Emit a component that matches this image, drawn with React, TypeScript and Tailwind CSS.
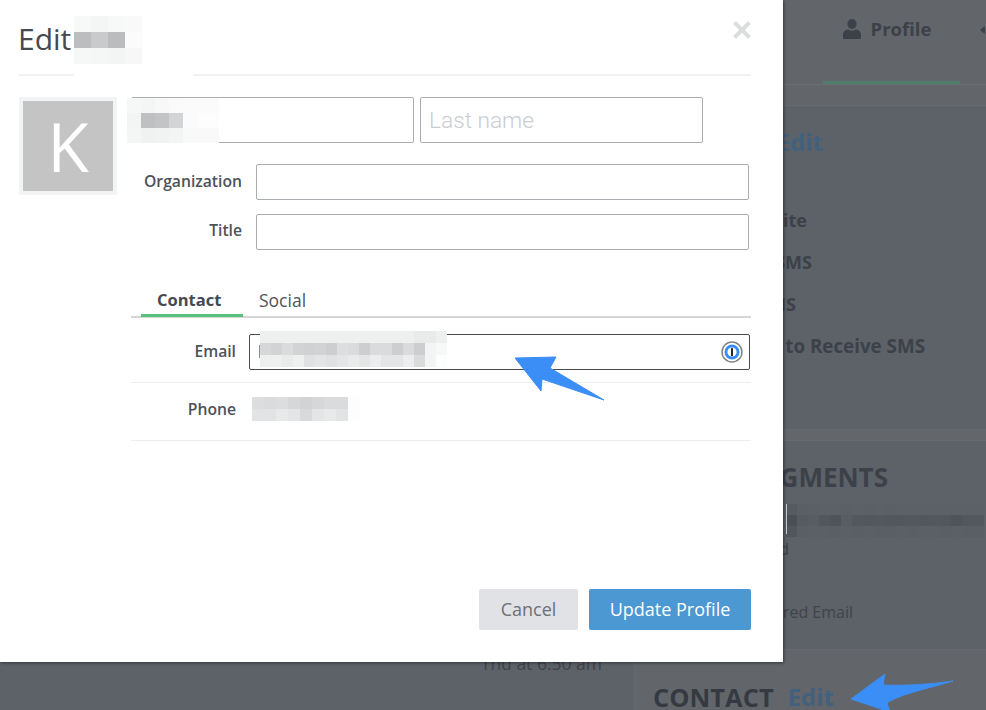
const Mosaic = ({ cols, cell, h, className }: { cols: string[][]; cell: number; h: number; className: string }) => (
  <div className={"absolute flex flex-col overflow-hidden " + className}>
    {cols.map((row, i) => (
      <div key={i} className="flex" style={{ height: h }}>
        {row.map((c, j) => (
          <div key={j} className="shrink-0" style={{ width: cell, height: h, backgroundColor: c }} />
        ))}
      </div>
    ))}
  </div>
);

const W = "#ffffff";
const inputCls = "h-full w-full rounded-[2px] border border-[#a9adb2] bg-white outline-none";

export default function App() {
  return (
    <div className="relative h-[710px] w-[986px] overflow-hidden bg-[#5d6168] font-['Open_Sans','Liberation_Sans',sans-serif] text-[#3a3f47]">
      {/* Page behind the dialog */}
      <div className="flex h-full">
        <div className="flex w-[635px] shrink-0 flex-col items-end justify-end border-r border-[#666a70] pb-[37px] pr-[32px]">
          <span className="text-[17.500px] leading-5 text-[#3f444b]">Thu at 6:50 am</span>
        </div>
        <div className="flex min-w-0 flex-1 flex-col">
          <div className="flex h-[85px] shrink-0 border-b border-[#6c7075] bg-[#62666a]">
            <div className="ml-[188px] flex h-[84px] w-[137px] shrink-0 justify-center border-b-[3px] border-[#4f7f6a] pr-[9px] pt-[16px]">
              <div className="flex h-[26px] items-center gap-[10px] text-[18.500px] font-bold text-[#3c4149]">
                <svg width="18" height="20" viewBox="0 0 18 20" fill="#3c4149">
                  <ellipse cx="9" cy="5" rx="4.600" ry="5" />
                  <path d="M1 20c-.6 0-1-.4-1-1v-3.600C0 12.500 3 10.500 5.500 10.500c1 .8 2.200 1.200 3.500 1.200s2.500-.4 3.500-1.200c2.500 0 5.500 2 5.500 4.900V19c0 .6-.4 1-1 1z" />
                </svg>
                Profile
              </div>
            </div>
            <svg className="ml-[20px] mt-[26px] shrink-0" width="5" height="8" viewBox="0 0 5 8" fill="#3c4149">
              <path d="M0 4 5 0V8Z" />
            </svg>
          </div>
          <div className="h-[21px] shrink-0 border-b border-[#666a70] bg-[#62666a]" />
          <div className="h-[323px] shrink-0 font-bold text-[#3c4149]">
            <div className="mt-[20px] flex h-[32px] w-[188px] items-center justify-end gap-[14px] text-[24px]">
              <span>PROFILE</span>
              <span className="text-[#43607c]">Edit</span>
            </div>
            <div className="mt-[41px] flex flex-col text-[18px] leading-[42px]">
              <span className="flex w-[172px] justify-end whitespace-nowrap">Website</span>
              <span className="flex w-[177px] justify-end whitespace-nowrap">Text SMS</span>
              <span className="flex w-[161px] justify-end whitespace-nowrap">Text SMS</span>
              <span className="flex w-[290px] justify-end whitespace-nowrap text-[18.800px]">Opted to Receive SMS</span>
            </div>
          </div>
          <div className="h-[12px] shrink-0 border-y border-[#666a70] bg-[#63676b]" />
          <div className="h-[208px] shrink-0 text-[#3c4149]">
            <div className="mt-[20px] flex w-[253px] justify-end whitespace-nowrap text-[26px] font-bold leading-[32px]">SEGMENTS</div>
            <div className="mt-[46px] flex w-[154px] justify-end whitespace-nowrap text-[16px] leading-5">Assigned</div>
            <div className="mt-[43px] flex w-[218px] justify-end whitespace-nowrap text-[16px] leading-5 text-[#3f444b]">Preferred Email</div>
          </div>
          <div className="border-t border-[#666a70] bg-[#62666a] pl-[18px] pt-[31px]">
            <div className="flex items-center gap-[14px] font-bold leading-[32px]">
              <span className="text-[25.500px] text-[#353a42]">CONTACT</span>
              <span className="text-[24px] text-[#43607c]">Edit</span>
            </div>
          </div>
        </div>
      </div>

      <Mosaic
        className="left-[786px] top-[504px]"
        cell={11}
        h={11}
        cols={[
          ["#555a61", "#5a5e65", "#5b5f66", "#5c6067", "#5c6067", "#5b5f66", "#5c6067", "#5b5f66", "#5c6067", "#5b5f66", "#5c6067", "#5c6067", "#5c6067", "#5c6067", "#5c6067", "#5c6067", "#5c6067", "#5c6067"],
          ["#4a4f57", "#565a61", "#585c63", "#52565e", "#4f535b", "#585c63", "#53575e", "#52565e", "#53575e", "#52565e", "#52565e", "#53575e", "#52565e", "#53575e", "#52565e", "#4f535b", "#52565e", "#53575e"],
          ["#51555d", "#5a5e65", "#5b5f66", "#5b5f66", "#5a5e65", "#5b5f66", "#5a5e65", "#5b5f66", "#5a5e65", "#5a5e65", "#5b5f66", "#5a5e65", "#5b5f66", "#5b5f66", "#5a5e65", "#5b5f66", "#5a5e65", "#5a5e65"],
        ]}
      />
      <div className="absolute left-[786px] top-[504px] h-[30px] w-px bg-[#c9cbce]" />

      {/* Dialog */}
      <div className="absolute left-0 top-0 flex h-[662px] w-[783px] flex-col bg-white pl-[19px] pr-[32px] shadow-[1px_1px_3px_rgba(0,0,0,0.45)]">
        <div className="relative h-[76px] shrink-0 border-b-2 border-[#f1f2f3]">
          <h1 className="-ml-px pt-[20px] text-[30px] font-normal leading-[38px] text-[#454a52]">Edit</h1>
          <span className="absolute right-[-1px] top-[20px] text-[#dcdddf]">
            <svg width="20" height="20" viewBox="0 0 20 20" fill="none" stroke="currentColor" strokeWidth="4">
              <path d="M2.500 2.500 17.500 17.500M17.500 2.500 2.500 17.500" />
            </svg>
          </span>
        </div>

        <div className="mt-[21px] flex">
          <div className="w-[112px] shrink-0">
            <div className="flex h-[98px] w-[98px] items-center justify-center rounded-[2px] border-[4px] border-[#f2f3f4] bg-[#c4c4c4] text-[68px] font-normal leading-none text-white">
              K
            </div>
          </div>
          <div className="w-[620px] text-[15.700px] font-semibold text-[#4d525a]">
            <div className="flex h-[46px] w-[572px] gap-[6px]">
              <div className="h-full flex-1">
                <input aria-label="First name" className={inputCls} />
              </div>
              <div className="h-full flex-1">
                <input
                  placeholder="Last name"
                  className={inputCls + " px-[8px] font-['Roboto',sans-serif] text-[22.700px] font-light text-[#3a3f47] placeholder:text-[#c9ccd1]"}
                />
              </div>
            </div>
            <div className="mt-[21px] flex h-[36px] items-center">
              <label className="w-[111px] pb-[3px] text-right leading-5">Organization</label>
              <div className="ml-[14px] h-full w-[493px]">
                <input aria-label="Organization" className={inputCls} />
              </div>
            </div>
            <div className="mt-[14px] flex h-[36px] items-center">
              <label className="w-[111px] pb-[5px] text-right leading-5">Title</label>
              <div className="ml-[14px] h-full w-[493px]">
                <input aria-label="Title" className={inputCls} />
              </div>
            </div>

            <div className="mt-[38px] flex h-[30px] border-b-2 border-[#d3d5d8] pl-[10px]">
              <div className="h-[29px] w-[102px] border-b-[3px] border-[#5ac17d] pl-[16px] text-[16.500px] font-bold leading-[24px] text-[#454a52]">
                Contact
              </div>
              <div className="ml-[16px] text-[17.500px] font-normal leading-[24px] text-[#4f545c]">Social</div>
            </div>

            <div className="flex h-[65px] items-start border-b border-[#eceded] pt-[16px]">
              <label className="flex h-[36px] w-[105px] items-center justify-end pb-[2px] leading-5">Email</label>
              <div className="relative ml-[13px] h-[36px] w-[501px]">
                <input aria-label="Email" className="h-full w-full rounded-[2px] border border-[#474c54] bg-white outline-none" />
                <svg className="absolute right-[7px] top-[7px]" width="22" height="22" viewBox="0 0 22 22">
                  <circle cx="11" cy="11" r="10" fill="#fff" stroke="#7f8388" strokeWidth="1.500" />
                  <circle cx="11" cy="11" r="7.500" fill="#3b8cf0" />
                  <circle cx="11" cy="11" r="4.600" fill="#fff" />
                  <rect x="10" y="7" width="2" height="8" rx="0.500" fill="#222730" />
                </svg>
              </div>
            </div>
            <div className="flex h-[58px] items-center border-b border-[#eceded] pb-[5px]">
              <label className="w-[105px] text-right leading-5">Phone</label>
            </div>
          </div>
        </div>

        <div className="mt-auto mb-[32px] flex justify-end gap-[11px] text-[18px]">
          <button className="h-[41px] w-[99px] rounded-[2px] bg-[#e0e2e6] font-normal text-[#6c7077]">Cancel</button>
          <button className="h-[41px] w-[162px] rounded-[2px] bg-[#4b98d3] font-normal text-white">Update Profile</button>
        </div>
      </div>

      {/* Redaction mosaics */}
      <Mosaic
        className="left-[74px] top-[16px]"
        cell={17}
        h={16}
        cols={[
          ["#f7f8f8", "#f4f5f5", "#f7f8f8", "#f9f9f9", W, W, W],
          ["#bcbdbf", "#c9cacc", "#bbbcbe", "#fbfbfb", W, W, W],
          ["#f6f7f7", "#f5f6f6", "#f3f4f4", "#f7f7f7", W, W, W],
          [W, W, W, W, W, W, W],
        ]}
      />
      <Mosaic
        className="left-[127px] top-[98px] w-[92px]"
        cell={14}
        h={15}
        cols={[
          ["#f6f7f7", "#f4f5f5", "#f8f8f8", "#fafafa", "#fbfbfb", "#fbfbfb", "#fbfbfb"],
          ["#f3f4f4", "#bfc0c2", "#c3c4c6", "#d3d4d6", "#fbfbfb", "#fdfdfd", "#fdfdfd"],
          ["#f4f5f5", "#f0f1f1", "#f1f2f2", "#f3f4f4", "#f9f9f9", "#f9f9f9", "#f9f9f9"],
          [W, W, W, W, W, W, W],
        ]}
      />
      <Mosaic
        className="left-[260px] top-[331px]"
        cell={11}
        h={12}
        cols={[
          ["#eeefef", "#eeefef", "#eeefef", "#eeefef", "#eeefef", "#eeefef", "#eeefef", "#eeefef", "#eeefef", "#eeefef", "#eeefef", "#eeefef", "#eeefef", "#eeefef", "#e9eaea", "#e9eaea", "#eeefef"],
          ["#d6d7d9", "#d2d3d5", "#dadbdc", "#d2d3d5", "#d0d1d3", "#d2d3d5", "#cdced0", "#dddedf", "#dadbdc", "#cdced0", "#dadbdc", "#dadbdc", "#cdced0", "#dadbdc", "#cdced0", "#f3f4f4", "#f8f8f8"],
          ["#eeefef", "#eeefef", "#e9eaea", "#eeefef", "#e0e1e2", "#e4e5e6", "#e0e1e2", "#e4e5e6", "#e9eaea", "#e4e5e6", "#ecedee", "#e4e5e6", "#e4e5e6", "#ecedee", "#dadbdc", "#f3f4f4", "#fdfdfd"],
        ]}
      />
      <div className="absolute left-[259px] top-[345px] h-[13px] w-px bg-[#8d9095]" />
      <Mosaic
        className="left-[252px] top-[397px]"
        cell={12}
        h={12}
        cols={[
          ["#dcdddf", "#dadbdc", "#dcdddf", "#d6d7d9", "#d2d3d5", "#d6d7d9", "#dadbdc", "#dadbdc", "#fdfdfd"],
          ["#e2e3e4", "#e2e3e4", "#e8e9e9", "#e4e5e6", "#d8d9db", "#e4e5e6", "#e8e9e9", "#e2e3e4", "#fdfdfd"],
        ]}
      />

      {/* Annotation arrows */}
      <svg className="absolute left-[510px] top-[350px]" width="100" height="56" viewBox="0 0 100 56">
        <path d="M5 8 46 7 40 18 94 50 32 29 31 41Z" fill="#3b8ef5" stroke="#3b8ef5" strokeLinejoin="round" />
      </svg>
      <svg className="absolute left-[845px] top-[670px]" width="115" height="40" viewBox="0 0 115 40">
        <path d="M6 29 40 4 38 15C62 16 88 14 108 11 85 18 55 24 42 33L45 42Z" fill="#3b8ef5" stroke="#3b8ef5" strokeLinejoin="round" />
      </svg>
    </div>
  );
}
